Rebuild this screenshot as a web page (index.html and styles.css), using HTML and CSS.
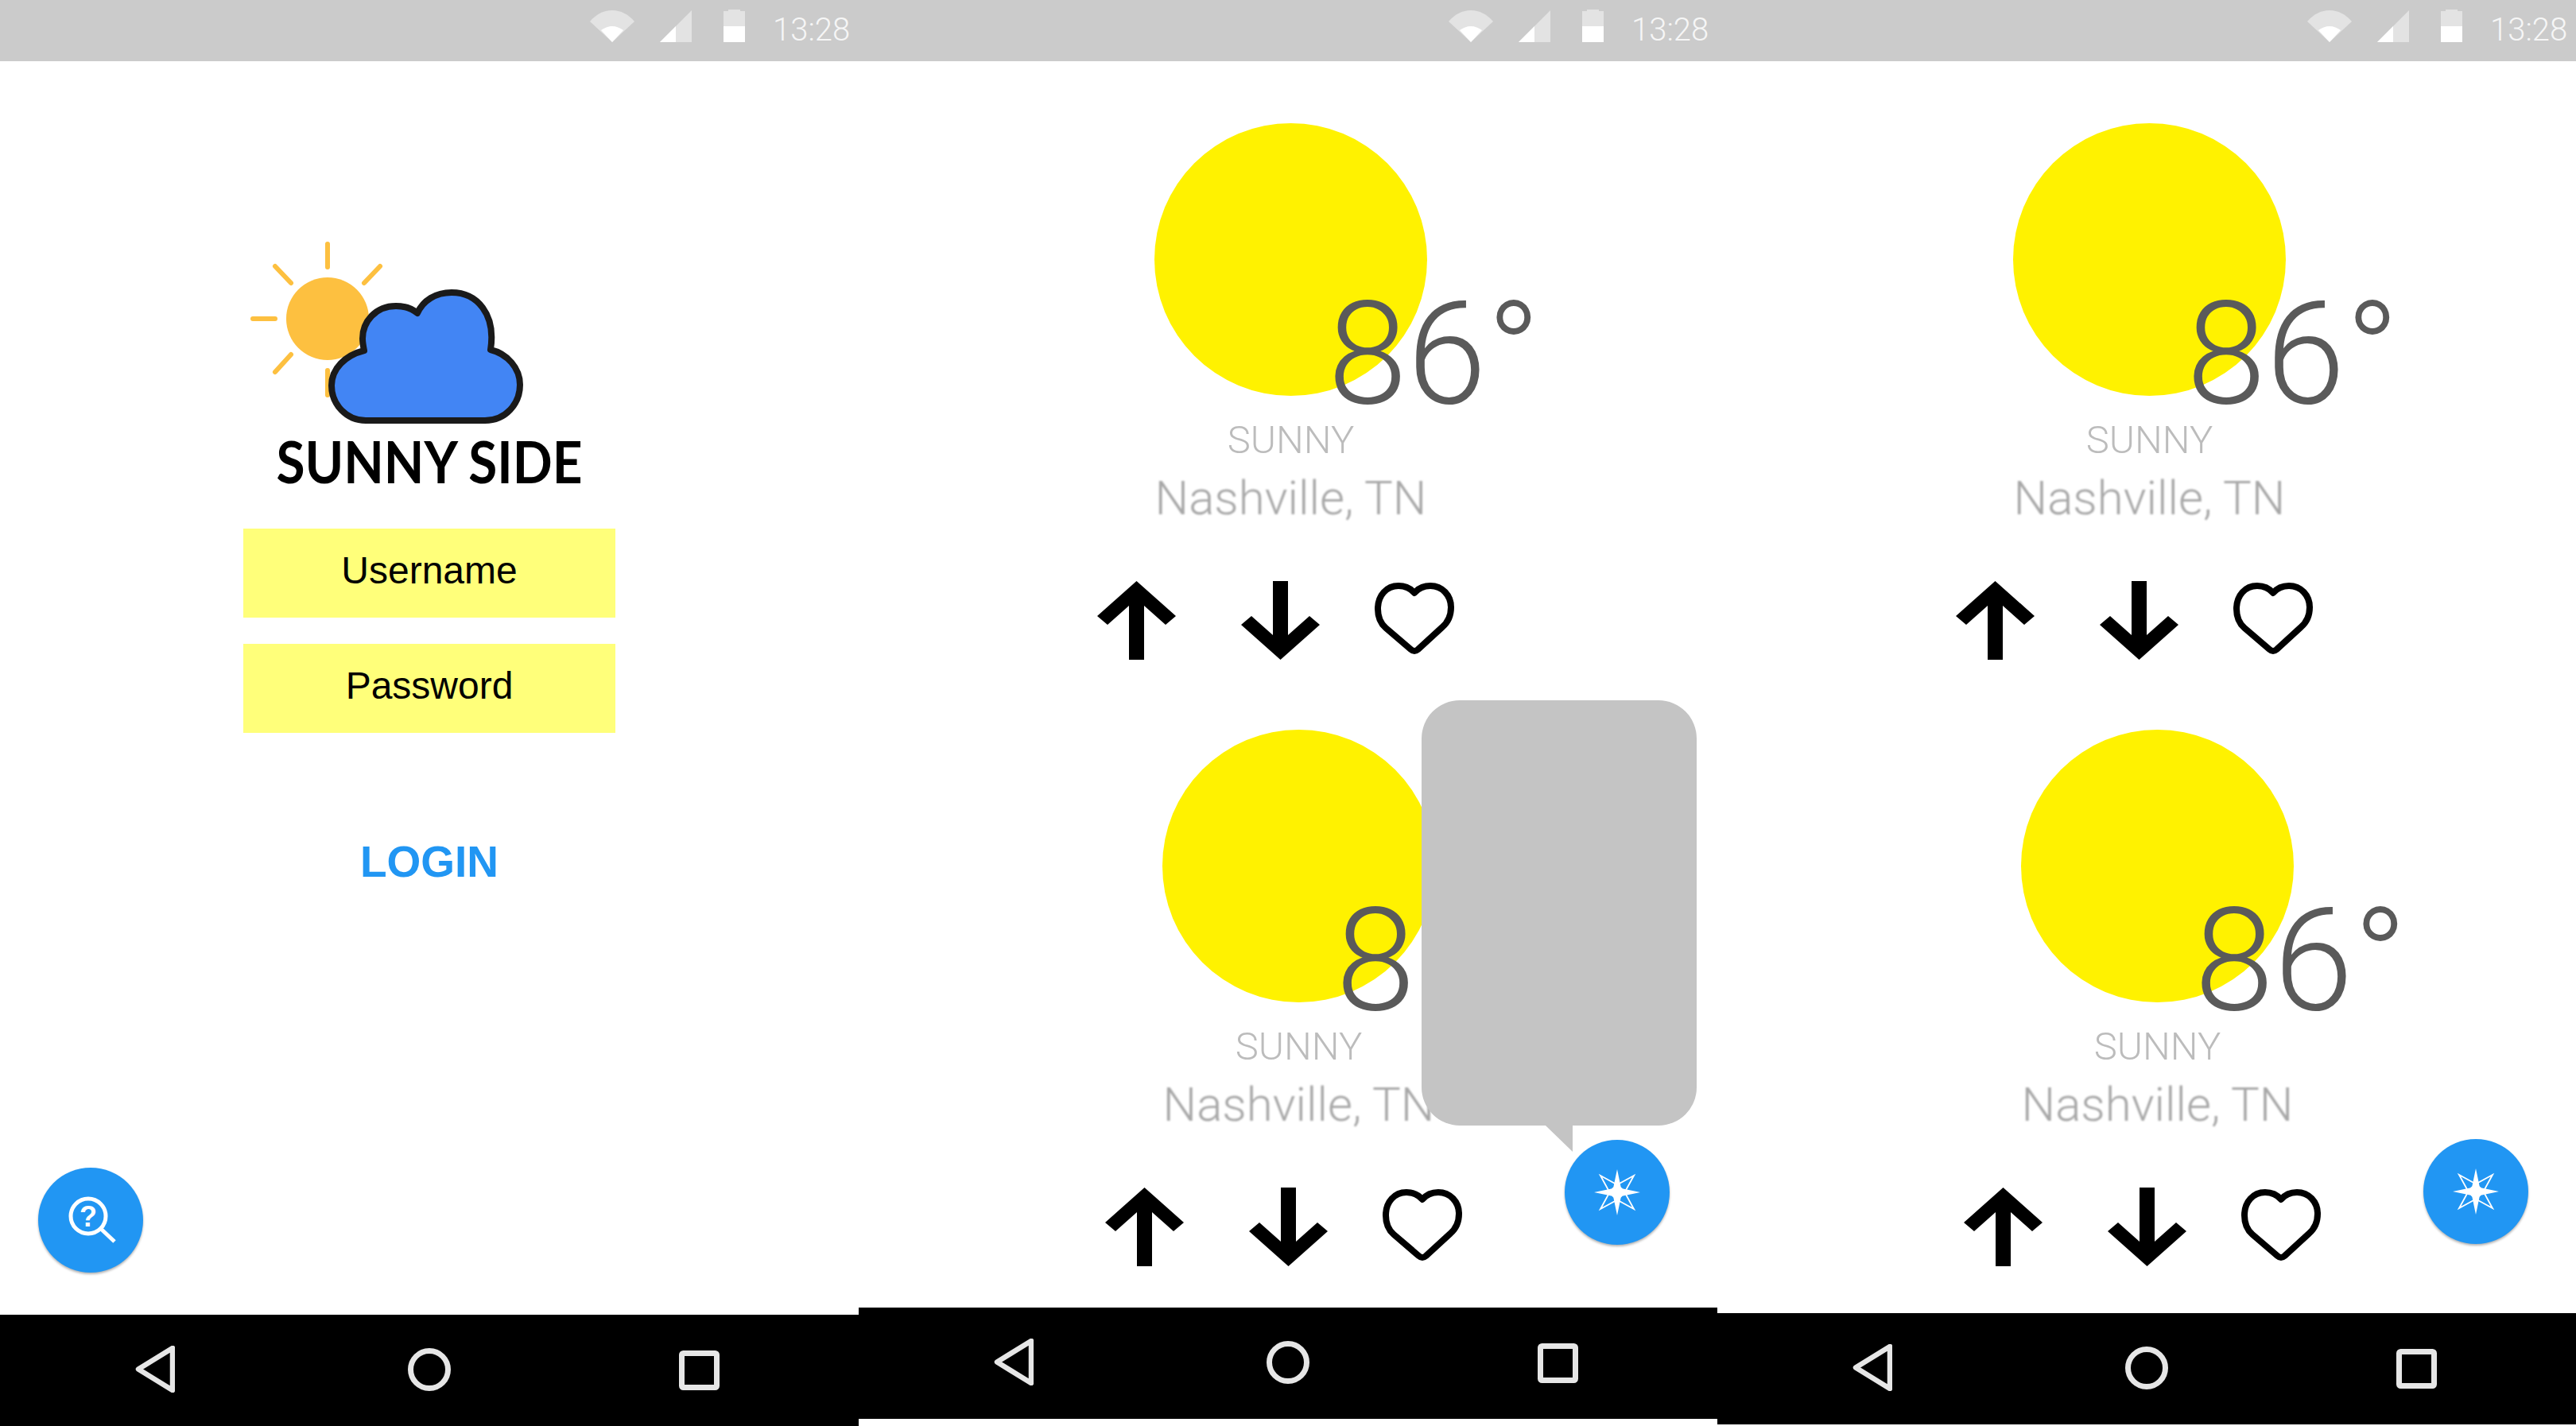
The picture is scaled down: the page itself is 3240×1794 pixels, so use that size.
FILE: index.html
```html
<!DOCTYPE html>
<html lang="en">
<head>
<meta charset="utf-8">
<title>Sunny Side</title>
<link rel="stylesheet" href="styles.css">
</head>
<body>
<svg class="defs" aria-hidden="true">
  <symbol id="i-wifi" viewBox="0 0 56 40">
    <path d="M28 40 0 14C8 5 17 0 28 0s20 5 28 14Z" fill="#e3e3e3"/>
    <path d="M28 40 14 25c4-3 9-5 14-5s10 2 14 5Z" fill="#fff"/>
  </symbol>
  <symbol id="i-signal" viewBox="0 0 40 40">
    <path d="M0 40 40 0V40Z" fill="#e3e3e3"/>
    <path d="M0 40 20 20V40Z" fill="#fff"/>
  </symbol>
  <symbol id="i-battery" viewBox="0 0 27 41">
    <path d="M0 2H6V0H21V2H27V21H0Z" fill="#e3e3e3"/>
    <rect y="21" width="27" height="20" fill="#fff"/>
  </symbol>
  <symbol id="i-back" viewBox="0 0 50 59">
    <path d="M47 3 4 29.500 47 56Z" fill="none" stroke="#e6e6e6" stroke-width="6.500" stroke-linejoin="round"/>
  </symbol>
  <symbol id="i-home" viewBox="0 0 54 54">
    <circle cx="27" cy="27" r="23.500" fill="none" stroke="#e6e6e6" stroke-width="7"/>
  </symbol>
  <symbol id="i-recent" viewBox="0 0 51 50">
    <rect x="3.500" y="3.500" width="44" height="43" rx="2" fill="none" stroke="#e6e6e6" stroke-width="7"/>
  </symbol>
  <symbol id="i-up" viewBox="0 0 99 99">
    <path d="M49.500 0 99 44 86 55 59 31V99H40V31L13 55 0 44Z"/>
  </symbol>
  <symbol id="i-down" viewBox="0 0 99 99">
    <path d="M49.500 99 0 55 13 44 40 68V0H59V68L86 44 99 55Z"/>
  </symbol>
  <symbol id="i-heart" viewBox="0 0 100 90">
    <path d="M50 86C48.500 86 47 85.300 45.500 84L14 57C7 51 4 43 4 33 4 16 15 4 30 4 38 4 45 7 50 13 55 7 62 4 70 4 85 4 96 16 96 31 96 42 92 50 85 56L54.500 84C53 85.300 51.500 86 50 86Z" fill="none" stroke="#000" stroke-width="8" stroke-linejoin="round"/>
  </symbol>
  <symbol id="i-star" viewBox="-32 -32 64 64">
    <path d="M0-29 5-5 29 0 5 5 0 29-5 5-29 0-5-5Z" fill="#fff"/>
    <circle r="8" fill="#fff"/>
    <path d="M21-21 9.500 0 21 21 0 9.500-21 21-9.500 0-21-21 0-9.500Z" fill="none" stroke="#fff" stroke-width="1.800"/>
  </symbol>
</svg>

<main class="screens">
  <section class="phone">
    <header class="status">
      <svg class="st-wifi"><use href="#i-wifi"/></svg>
      <svg class="st-signal"><use href="#i-signal"/></svg>
      <svg class="st-battery"><use href="#i-battery"/></svg>
      <span class="clock">13:28</span>
    </header>
    <div class="content content-login">
      <svg class="logo" viewBox="310 300 460 240">
        <g stroke="#fdc040" stroke-width="6" stroke-linecap="round">
          <path d="M412 307V336M412 466V497M318 401H346M346 335 366 356M478 335 458 356M346 468 366 446"/>
        </g>
        <circle cx="412" cy="401" r="52" fill="#fdc040"/>
        <path d="M460 529H610C636 529 654 508 654 484 654 463 638 445 617 440 624 395 600 368 568 368 548 368 532 378 525 394 518 388 508 385 498 385 472 385 456 405 456 426 456 431 457 436 458 441 434 447 417 464 417 485 417 509 436 529 460 529Z" fill="#4285f4" stroke="#1a1a1a" stroke-width="8" stroke-linejoin="round"/>
      </svg>
      <h1 class="brand">SUNNY SIDE</h1>
      <div class="field">Username</div>
      <div class="field field-next">Password</div>
      <div class="login">LOGIN</div>
      <div class="fab fab-help">
        <svg class="help-icon" viewBox="0 0 62 62">
          <circle cx="26" cy="26" r="22" fill="none" stroke="#fff" stroke-width="5"/>
          <path d="M42 42 59 58" stroke="#fff" stroke-width="5"/>
          <text x="26" y="39" text-anchor="middle" class="help-mark">?</text>
        </svg>
      </div>
    </div>
    <nav class="navbar">
      <svg class="nv-back"><use href="#i-back"/></svg>
      <svg class="nv-home"><use href="#i-home"/></svg>
      <svg class="nv-recent"><use href="#i-recent"/></svg>
    </nav>
  </section>

  <section class="phone">
    <header class="status">
      <svg class="st-wifi"><use href="#i-wifi"/></svg>
      <svg class="st-signal"><use href="#i-signal"/></svg>
      <svg class="st-battery"><use href="#i-battery"/></svg>
      <span class="clock">13:28</span>
    </header>
    <div class="content content-mid">
      <article class="card">
        <div class="sun"><span class="temp">86°</span></div>
        <div class="cond">SUNNY</div>
        <div class="city">Nashville, TN</div>
        <div class="actions">
          <svg class="act-arrow"><use href="#i-up"/></svg>
          <svg class="act-arrow act-down"><use href="#i-down"/></svg>
          <svg class="act-heart"><use href="#i-heart"/></svg>
        </div>
      </article>
      <article class="card card-second">
        <div class="sun"><span class="temp">86°</span></div>
        <div class="cond">SUNNY</div>
        <div class="city">Nashville, TN</div>
        <div class="actions">
          <svg class="act-arrow"><use href="#i-up"/></svg>
          <svg class="act-arrow act-down"><use href="#i-down"/></svg>
          <svg class="act-heart"><use href="#i-heart"/></svg>
        </div>
      </article>
      <div class="bubble"></div>
      <div class="fab fab-star"><svg class="star-icon"><use href="#i-star"/></svg></div>
    </div>
    <nav class="navbar">
      <svg class="nv-back"><use href="#i-back"/></svg>
      <svg class="nv-home"><use href="#i-home"/></svg>
      <svg class="nv-recent"><use href="#i-recent"/></svg>
    </nav>
  </section>

  <section class="phone">
    <header class="status">
      <svg class="st-wifi"><use href="#i-wifi"/></svg>
      <svg class="st-signal"><use href="#i-signal"/></svg>
      <svg class="st-battery"><use href="#i-battery"/></svg>
      <span class="clock">13:28</span>
    </header>
    <div class="content content-end">
      <article class="card">
        <div class="sun"><span class="temp">86°</span></div>
        <div class="cond">SUNNY</div>
        <div class="city">Nashville, TN</div>
        <div class="actions">
          <svg class="act-arrow"><use href="#i-up"/></svg>
          <svg class="act-arrow act-down"><use href="#i-down"/></svg>
          <svg class="act-heart"><use href="#i-heart"/></svg>
        </div>
      </article>
      <article class="card card-second">
        <div class="sun"><span class="temp">86°</span></div>
        <div class="cond">SUNNY</div>
        <div class="city">Nashville, TN</div>
        <div class="actions">
          <svg class="act-arrow"><use href="#i-up"/></svg>
          <svg class="act-arrow act-down"><use href="#i-down"/></svg>
          <svg class="act-heart"><use href="#i-heart"/></svg>
        </div>
      </article>
      <div class="fab fab-star fab-star-end"><svg class="star-icon"><use href="#i-star"/></svg></div>
    </div>
    <nav class="navbar">
      <svg class="nv-back"><use href="#i-back"/></svg>
      <svg class="nv-home"><use href="#i-home"/></svg>
      <svg class="nv-recent"><use href="#i-recent"/></svg>
    </nav>
  </section>
</main>
</body>
</html>
```
FILE: styles.css
```css
html, body {
  margin: 0;
  padding: 0;
  background: #fff;
  overflow: hidden;
}
.defs {
  position: absolute;
  width: 0;
  height: 0;
}
.screens {
  display: flex;
  width: 3240px;
  height: 1794px;
}
.phone {
  width: 1080px;
  flex: none;
  display: flex;
  flex-direction: column;
}
.status {
  height: 77px;
  flex: none;
  background: #cbcbcb;
  display: flex;
  align-items: flex-start;
  padding: 13px 0 0 742px;
  box-sizing: border-box;
}
.status svg { display: block; flex: none; }
.st-wifi { width: 56px; height: 40px; }
.st-signal { width: 40px; height: 40px; margin-left: 32px; }
.st-battery { width: 27px; height: 41px; margin-left: 40px; margin-top: -1px; }
.clock {
  margin-left: 35px;
  margin-top: -5px;
  font: 300 40px/60px Roboto, sans-serif;
  color: #f6f6f6;
}
.content {
  position: relative;
  flex: none;
  box-sizing: border-box;
}
.content-login {
  height: 1577px;
  padding-top: 223px;
  display: flex;
  flex-direction: column;
  align-items: center;
}
.content-mid { height: 1568px; padding-top: 78px; }
.content-end { height: 1575px; padding-top: 78px; }
.navbar {
  height: 140px;
  flex: none;
  background: #000;
  display: flex;
  align-items: center;
  padding-left: 170px;
}
.navbar svg { display: block; flex: none; }
.nv-back { width: 50px; height: 59px; margin-top: -3px; }
.nv-home { width: 54px; height: 54px; margin-left: 293px; margin-top: -2px; }
.nv-recent { width: 51px; height: 50px; margin-left: 287px; }

.logo {
  display: block;
  width: 460px;
  height: 240px;
  flex: none;
}
.brand {
  margin: -2px 0 0;
  height: 87px;
  font: 700 73px/85px Lato, sans-serif;
  color: #000;
  white-space: nowrap;
  flex: none;
  transform: scaleX(.9);
}
.field {
  width: 468px;
  height: 112px;
  margin-top: 40px;
  padding-top: 24px;
  box-sizing: border-box;
  background: #ffff7a;
  color: #000;
  text-align: center;
  font: 48px/58px "Liberation Sans", Arial, sans-serif;
  flex: none;
}
.field-next { margin-top: 33px; }
.login {
  margin-top: 132px;
  font: 700 55px/60px "Liberation Sans", Arial, sans-serif;
  color: #2196f3;
}
.fab {
  position: absolute;
  width: 132px;
  height: 132px;
  border-radius: 50%;
  background: #2196f3;
  box-shadow: 0 2px 3px rgba(0, 0, 0, .3);
  display: flex;
  align-items: center;
  justify-content: center;
}
.fab-help { left: 48px; top: 1392px; }
.fab-star { left: 888px; top: 1357px; }
.fab-star-end { top: 1356px; }
.help-icon {
  width: 62px;
  height: 62px;
  margin: 0 0 0 4px;
}
.help-mark {
  font: 700 36px "Liberation Sans", Arial, sans-serif;
  fill: #fff;
}
.star-icon { width: 64px; height: 64px; display: block; }

.card {
  width: 343px;
  margin-left: 372px;
  display: flex;
  flex-direction: column;
  align-items: center;
}
.card-second {
  margin-left: 382px;
  margin-top: 88px;
}
.sun {
  position: relative;
  width: 343px;
  height: 343px;
  border-radius: 50%;
  background: #fff200;
  flex: none;
  filter: blur(.5px);
}
.temp {
  position: absolute;
  left: 218px;
  top: 191px;
  font: 300 180px/200px Roboto, sans-serif;
  color: #5a5a5a;
  white-space: nowrap;
}
.cond {
  margin-top: 26px;
  font: 300 49px/60px Roboto, sans-serif;
  color: #bcbcbc;
  white-space: nowrap;
  filter: blur(.7px);
}
.city {
  margin-top: 10px;
  font: 300 60px/66px Roboto, sans-serif;
  color: #a8a8a8;
  white-space: nowrap;
  filter: blur(.8px);
}
.actions {
  margin-top: 71px;
  align-self: flex-start;
  margin-left: -72px;
  display: flex;
  align-items: flex-start;
}
.act-arrow { width: 99px; height: 99px; display: block; flex: none; }
.act-down { margin-left: 82px; }
.act-heart { width: 100px; height: 90px; display: block; flex: none; margin: 2px 0 0 69px; }
.bubble {
  position: absolute;
  left: 708px;
  top: 804px;
  width: 346px;
  height: 535px;
  border-radius: 48px;
  background: #c4c4c4;
}
.bubble::after {
  content: "";
  position: absolute;
  left: 156px;
  top: 535px;
  width: 34px;
  height: 33px;
  background: #c4c4c4;
  clip-path: polygon(0 0, 100% 0, 100% 100%);
}
```
